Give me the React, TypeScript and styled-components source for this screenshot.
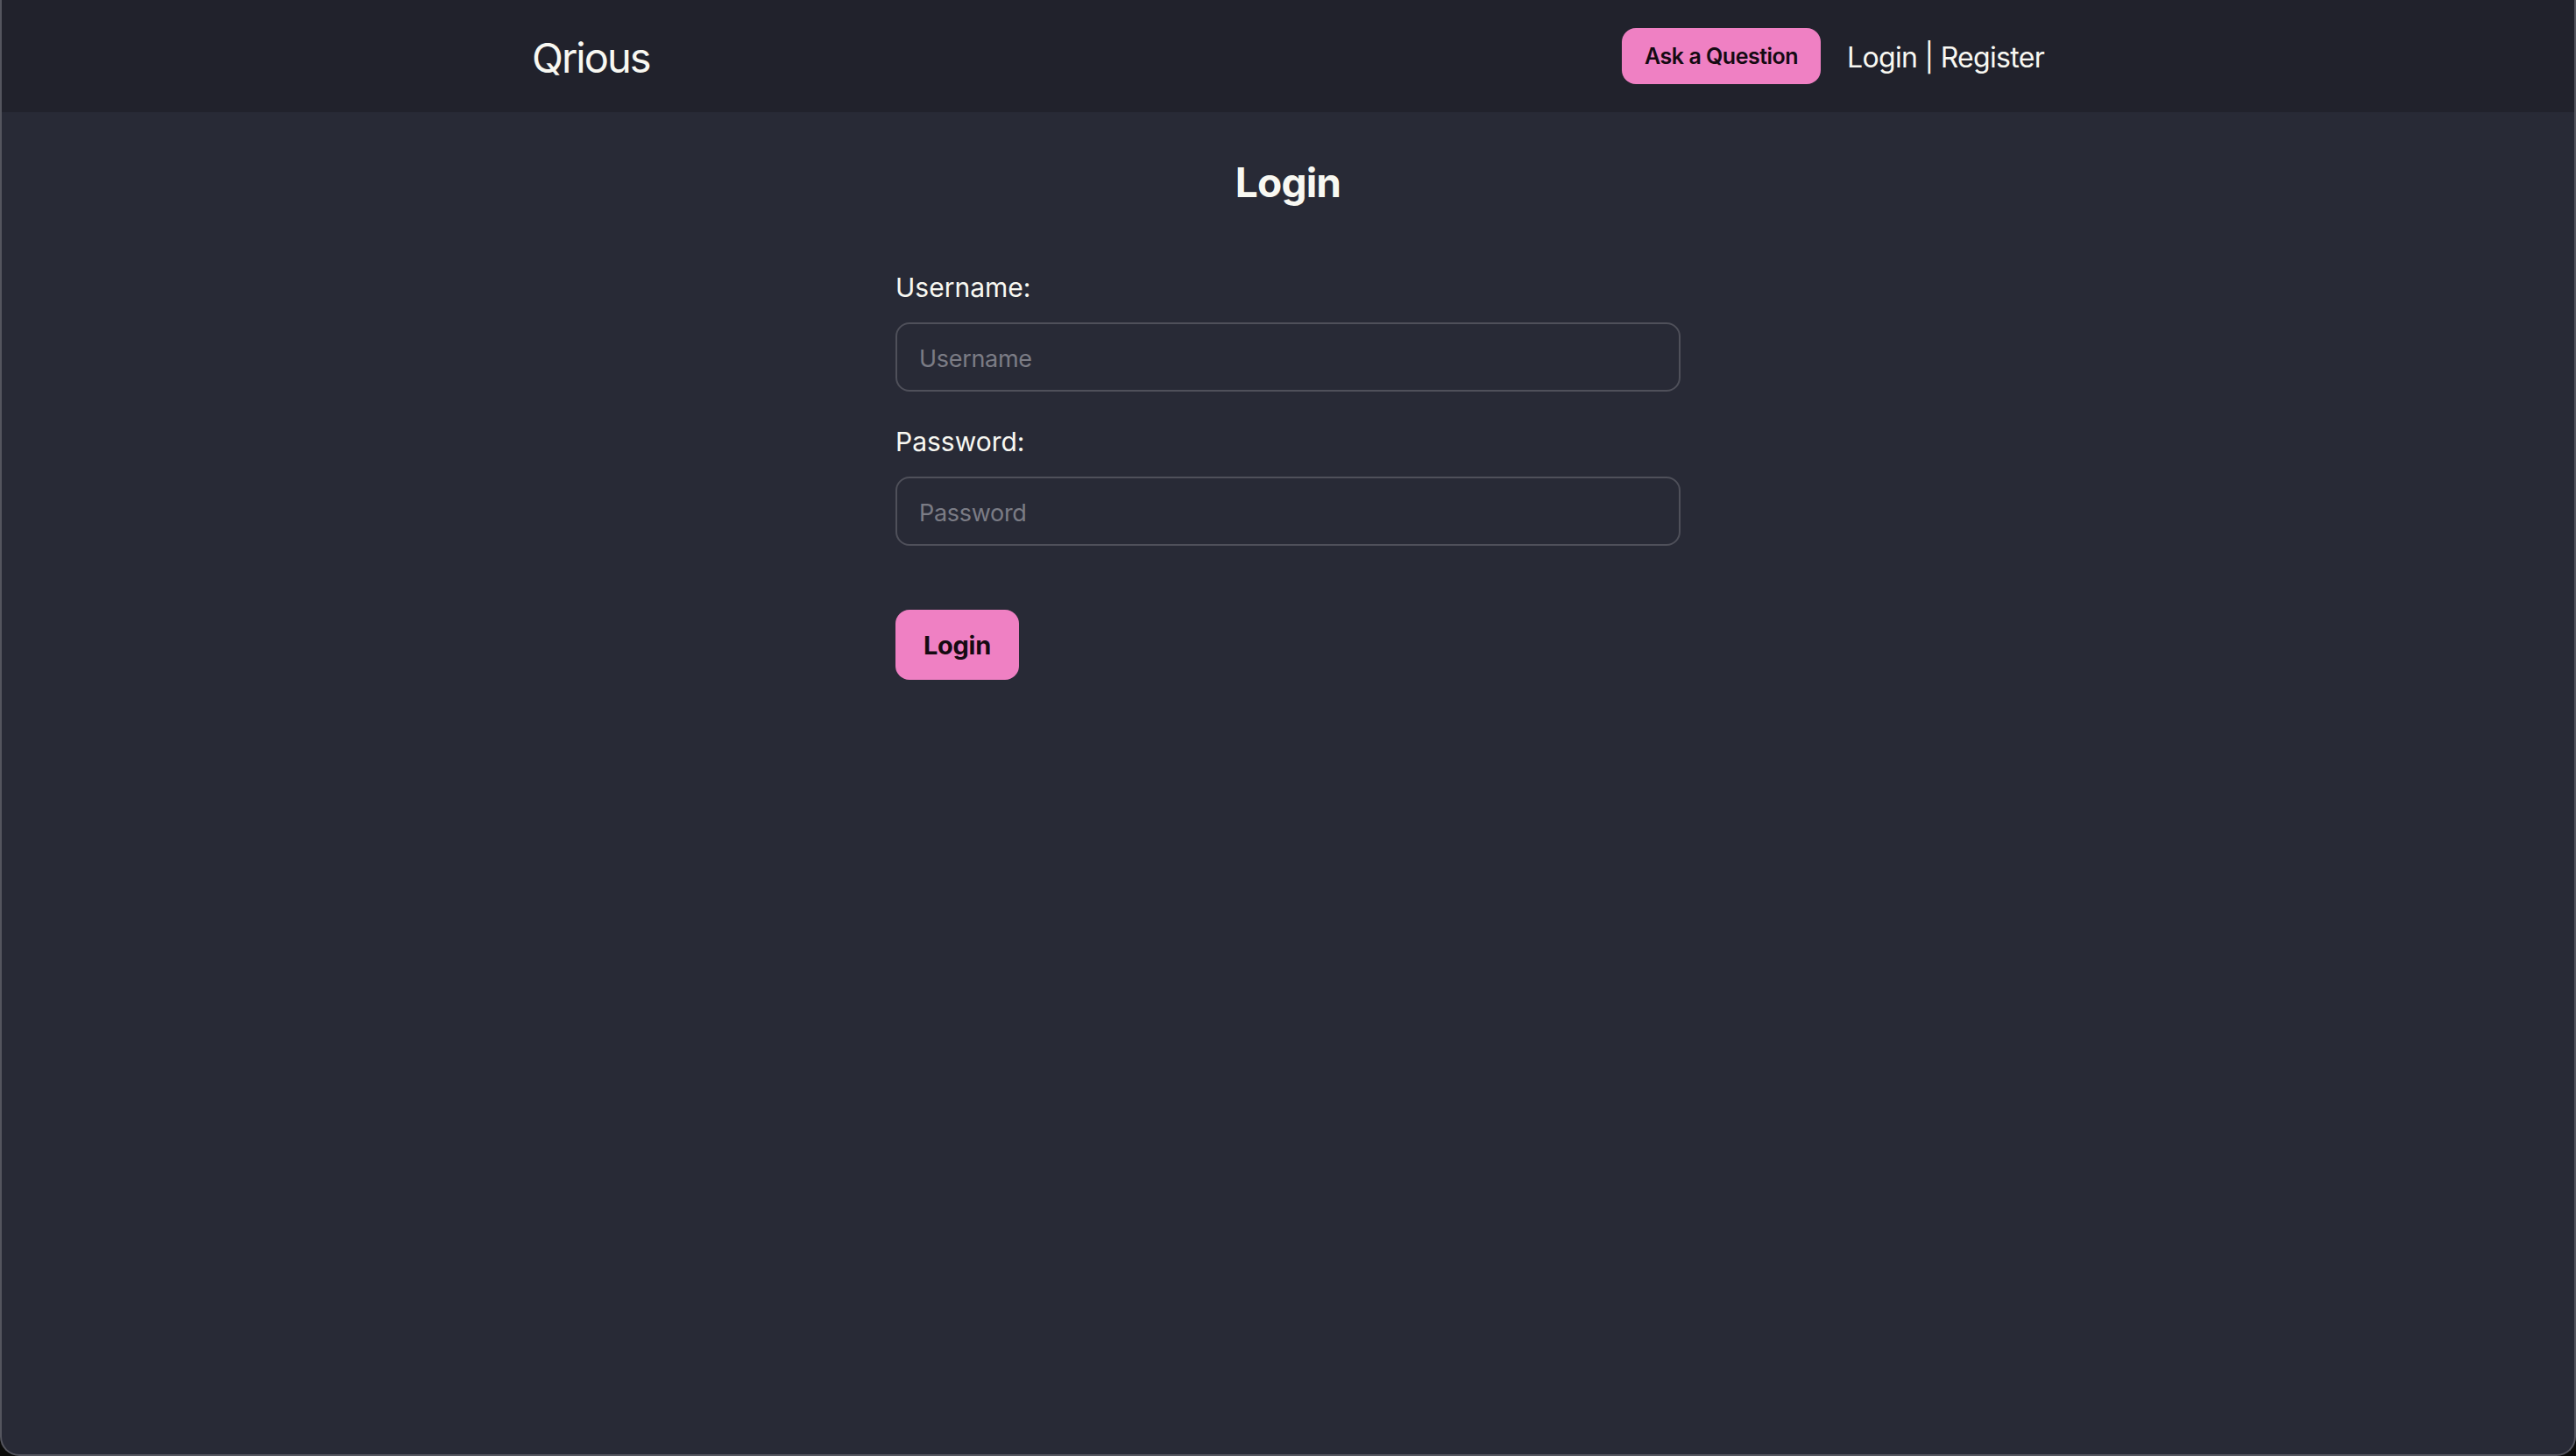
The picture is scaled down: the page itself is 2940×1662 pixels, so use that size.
import React from "react";
import styled, { createGlobalStyle } from "styled-components";

const GlobalStyle = createGlobalStyle`
  html, body {
    margin: 0;
    padding: 0;
    background: #0b0b0a;
  }
  * { box-sizing: border-box; }
  body {
    font-family: Inter, "Noto Sans", "Liberation Sans", sans-serif;
    -webkit-font-smoothing: antialiased;
  }
`;

const Frame = styled.div`
  height: 1662px;
  display: flex;
  flex-direction: column;
  background: #282a36;
  border: 2px solid #54555e;
  border-top: none;
  border-radius: 0 0 22px 22px;
  overflow: hidden;
`;

const Header = styled.header`
  height: 128px;
  flex-shrink: 0;
  background: #21222c;
  display: flex;
  align-items: center;
`;

const HeaderInner = styled.div`
  width: 1726px;
  margin: 0 auto;
  display: flex;
  align-items: center;
  justify-content: space-between;
`;

const Brand = styled.a`
  display: block;
  padding-top: 3px;
  font-size: 47px;
  font-weight: 400;
  letter-spacing: -2px;
  color: #f8f8f2;
  text-decoration: none;
  line-height: 58px;
`;

const Nav = styled.nav`
  display: flex;
  align-items: center;
  gap: 30px;
`;

const PinkButton = styled.button<{ $size: "sm" | "md" }>`
  border: none;
  background: #ef80c3;
  color: #150a12;
  font-family: inherit;
  cursor: pointer;
  border-radius: 16px;
  height: ${(p) => (p.$size === "sm" ? "64px" : "80px")};
  padding: ${(p) => (p.$size === "sm" ? "0 26px" : "0 32px")};
  font-size: ${(p) => (p.$size === "sm" ? "25px" : "29px")};
  font-weight: ${(p) => (p.$size === "sm" ? 600 : 700)};
  letter-spacing: ${(p) => (p.$size === "sm" ? "-0.5px" : "-0.3px")};
`;

const AuthLinks = styled.div`
  padding-top: 3px;
  font-size: 32px;
  color: #f8f8f2;
  letter-spacing: -0.7px;
  line-height: 40px;
`;

const Main = styled.main`
  flex: 1;
  padding-top: 51px;
  display: flex;
  flex-direction: column;
  align-items: center;
`;

const Title = styled.h1`
  margin: 0;
  font-size: 46px;
  font-weight: 700;
  line-height: 58px;
  color: #f8f8f2;
  letter-spacing: -0.8px;
`;

const Form = styled.form`
  width: 896px;
  margin-top: 73px;
  display: flex;
  flex-direction: column;
`;

const Field = styled.div`
  display: flex;
  flex-direction: column;
  gap: 22px;
  margin-bottom: 39px;
`;

const Label = styled.label`
  font-size: 30px;
  line-height: 36px;
  color: #f8f8f2;
  letter-spacing: 0px;
`;

const Input = styled.input`
  height: 79px;
  width: 100%;
  background: transparent;
  border: 2px solid #4f505a;
  border-radius: 16px;
  padding: 3px 25px 0;
  font-family: inherit;
  font-size: 27px;
  color: #f8f8f2;
  outline: none;
  &::placeholder {
    color: #7b7c85;
    letter-spacing: -0.3px;
  }
`;

const Actions = styled.div`
  margin-top: 34px;
  display: flex;
`;

export default function App() {
  return (
    <>
      <GlobalStyle />
      <Frame>
        <Header>
          <HeaderInner>
            <Brand href="#">Qrious</Brand>
            <Nav>
              <PinkButton $size="sm">Ask a Question</PinkButton>
              <AuthLinks>Login | Register</AuthLinks>
            </Nav>
          </HeaderInner>
        </Header>
        <Main>
          <Title>Login</Title>
          <Form onSubmit={(e) => e.preventDefault()}>
            <Field>
              <Label htmlFor="username">Username:</Label>
              <Input id="username" placeholder="Username" />
            </Field>
            <Field>
              <Label htmlFor="password">Password:</Label>
              <Input id="password" type="password" placeholder="Password" />
            </Field>
            <Actions>
              <PinkButton $size="md" type="submit">Login</PinkButton>
            </Actions>
          </Form>
        </Main>
      </Frame>
    </>
  );
}
